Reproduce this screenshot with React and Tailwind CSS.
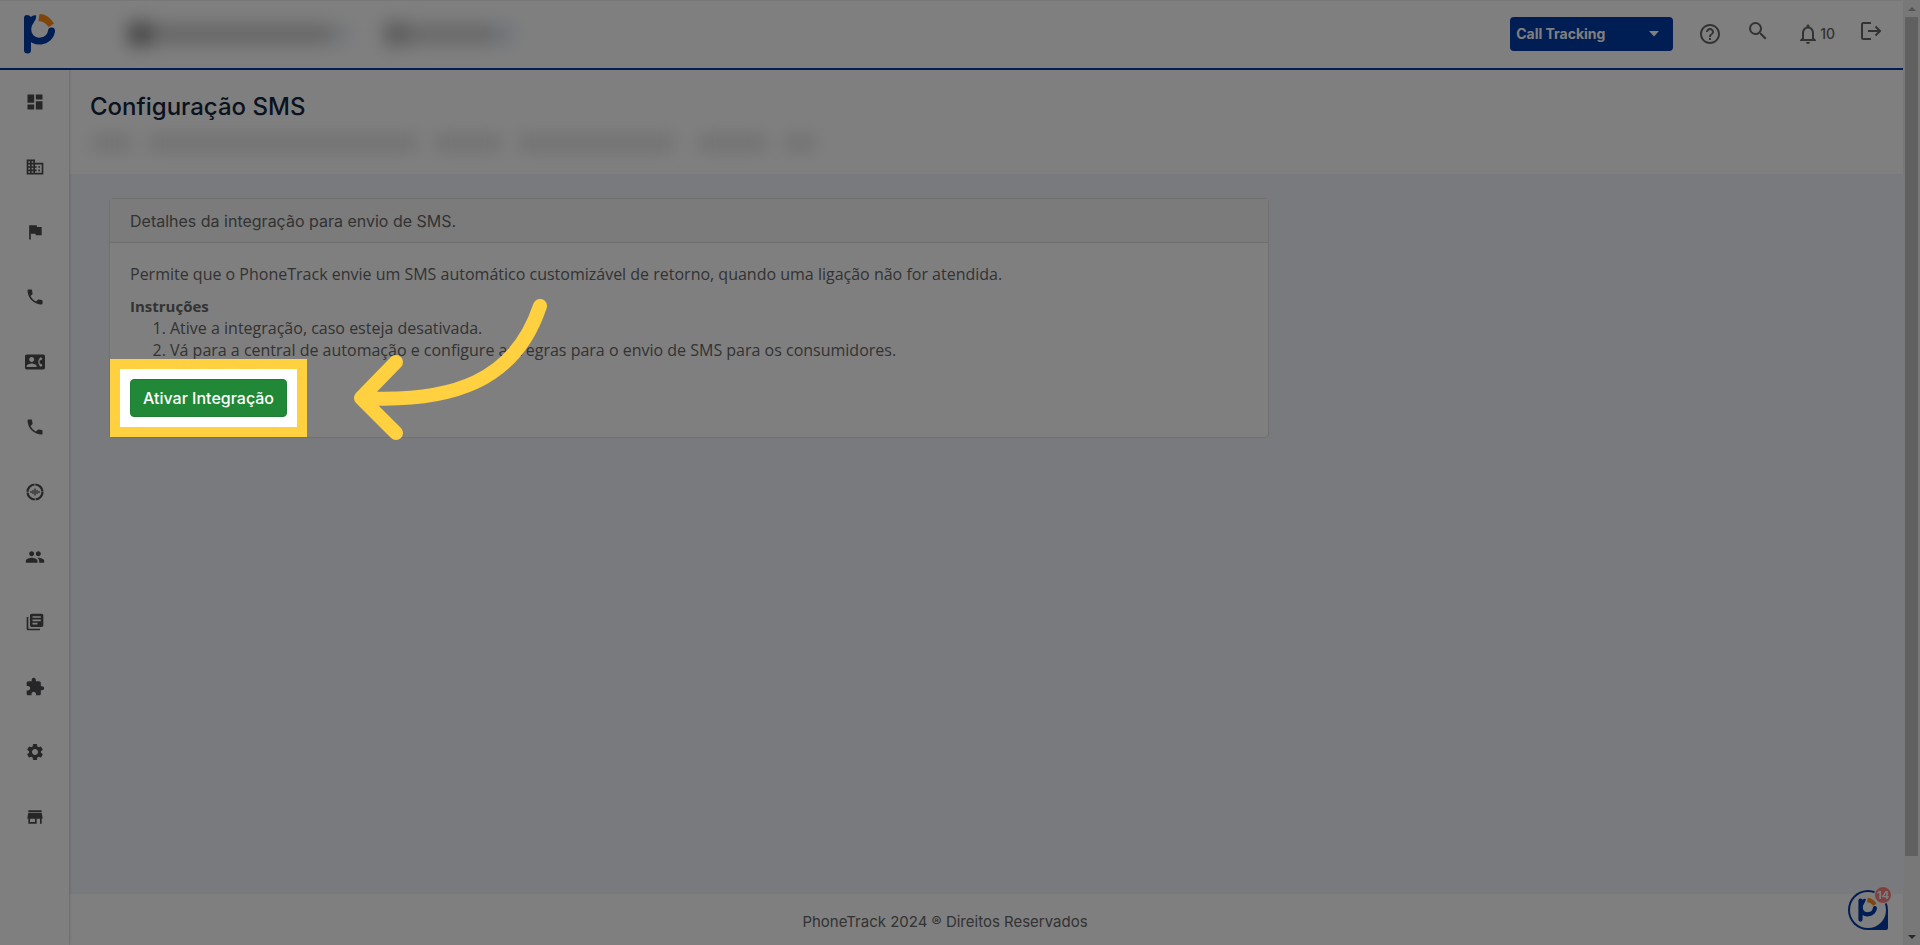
import { MdBusiness, MdContactPhone, MdDashboard, MdExtension, MdFlag, MdHelpOutline, MdLibraryBooks, MdNotificationsNone, MdPeople, MdPhone, MdSearch, MdSettings, MdStore } from 'react-icons/md'


const RecordIcon = () => (
  <svg className="size-5" viewBox="0 0 20 20" fill="none" stroke="currentColor">
    <circle cx="10" cy="10" r="7.5" strokeWidth="2.2" strokeDasharray="11 0.8" />
    <path d="M6 9v2M8 8v4M10 6.5v7M12 8v4M14 9v2" strokeWidth="1.2" />
  </svg>
)

const LogoutIcon = () => (
  <svg className="w-5 h-[18px]" viewBox="0 0 20 18" fill="none" stroke="currentColor" strokeWidth="2">
    <path d="M10 1H2.5Q1 1 1 2.5v13Q1 17 2.5 17H10M7 9h12M14.5 4.5 19 9l-4.5 4.5" />
  </svg>
)

const LogoMark = ({ className }) => (
  <svg className={className} viewBox="0 0 32 40" fill="none">
    <path d="M0 4Q0 1 3 1 5.5 1 7 3 9 .5 12.3 1.5 12.5 5.5 9.5 9 6.5 13 7.5 17.5L7 26V36Q7 39.5 3.5 39.5 0 39.5 0 36z" fill="#003aa8" />
    <path d="M27.5 17A12 11.500 0 0 1 4.5 20" stroke="#003aa8" strokeWidth="7" strokeLinecap="round" />
    <path d="M15.5 0Q24.5 0 30 9.5L24.5 13Q21 7.5 14.5 7z" fill="#ff8a14" />
  </svg>
)

const menu = [
  { label: 'Dashboard', Icon: MdDashboard },
  { label: 'Empresas', Icon: MdBusiness },
  { label: 'Campanhas', Icon: MdFlag },
  { label: 'Ligações', Icon: MdPhone },
  { label: 'Contatos', Icon: MdContactPhone },
  { label: 'Telefones', Icon: MdPhone },
  { label: 'Gravações', Icon: RecordIcon },
  { label: 'Usuários', Icon: MdPeople },
  { label: 'Relatórios', Icon: MdLibraryBooks },
  { label: 'Integrações', Icon: MdExtension },
  { label: 'Configurações', Icon: MdSettings },
  { label: 'Loja', Icon: MdStore },
]

const Header = () => (
  <header className="h-[70px] shrink-0 flex items-center bg-white border-t border-t-[#eeeeee] border-b-2 border-b-[#003aa8] pl-6 pr-[22px] pb-0.5 text-[#666666]">
    <a href="#" aria-label="PhoneTrack"><LogoMark className="w-8 h-10" /></a>
    {/* Account details are hidden */}
    <div className="flex-1 flex items-center gap-8 pl-[72px] blur-[9px]">
      <div className="flex items-center">
        <div className="w-6 h-6 bg-[#909090]" />
        <div className="w-[180px] h-5 bg-[#cccccc]" />
        <div className="w-5 h-5 bg-[#e8eef6]" />
      </div>
      <div className="flex items-center">
        <div className="w-6 h-6 bg-[#b8b8b8]" />
        <div className="w-[88px] h-5 bg-[#d0d0d0]" />
        <div className="w-5 h-5 bg-[#e0eaf6]" />
      </div>
    </div>
    <div className="relative">
      <select aria-label="Produto" className="appearance-none w-[163px] h-[34px] pl-1.5 rounded bg-[#003aa8] text-white text-[14px] font-bold">
        <option>Call Tracking</option>
      </select>
      <svg className="absolute right-3.5 top-3.5 w-2.5 h-[6px] pointer-events-none" viewBox="0 0 10 6"><path d="M0 0h10L5 5.5z" fill="#fff" /></svg>
    </div>
    <button aria-label="Ajuda" className="ml-[25px]"><MdHelpOutline className="size-6" /></button>
    <button aria-label="Buscar" className="ml-6 pb-1.5"><MdSearch className="size-6" /></button>
    <button aria-label="Notificações" className="ml-[26px] flex items-center text-[14px] font-medium"><MdNotificationsNone className="size-6" />10</button>
    <button aria-label="Sair" className="ml-[26px] pb-1.5"><LogoutIcon /></button>
  </header>
)

const Sidebar = () => (
  <nav className="w-[69px] shrink-0 bg-white flex flex-col items-center gap-[45px] pt-[22px] text-[#4c4c50] shadow-[0_0_3px_rgba(0,0,0,0.3)] z-[1]">
    {menu.map(({ label, Icon }) => (
      <a key={label} href="#" aria-label={label}><Icon className="size-5" /></a>
    ))}
  </nav>
)

const Scrollbar = () => (
  <div className="w-[17px] shrink-0 bg-[#f1f1f1] flex flex-col items-center pt-[7px] pb-[6px]">
    <svg className="w-2 h-1 shrink-0" viewBox="0 0 8 4"><path d="M4 0 8 4H0z" fill="#a3a3a3" /></svg>
    <div className="w-[13px] basis-[839px] grow-0 mt-1.5 bg-[#c1c1c1]" />
    <svg className="w-2 h-1 shrink-0 mt-auto" viewBox="0 0 8 4"><path d="M0 0h8L4 4z" fill="#505050" /></svg>
  </div>
)

const ActivateButton = () => (
  <div className="relative z-20 w-fit -mx-5 -mt-0.5 border-[10px] border-[#ffd140] bg-white p-2.5 shadow-[0_0_0_4000px_rgba(0,0,0,0.5)]">
    <button className="h-[38px] px-3 rounded bg-[#218838] border border-[#1e7e34] text-white font-['Inter'] text-base font-medium whitespace-nowrap">
      Ativar Integração
    </button>
    <svg className="absolute left-[228px] -top-[70px] w-[200px] h-[144px]" viewBox="0 0 200 144" fill="none" stroke="#ffd140" strokeWidth="14" strokeLinecap="round" strokeLinejoin="round">
      <path d="M192 7C167 82 105 104 13 99M48 63 13 99l35 35" />
    </svg>
  </div>
)

const App = () => {
  return (
    <div className="min-h-screen flex overflow-hidden font-['Inter','Open_Sans',sans-serif] text-[#666666]">
      <div className="flex-1 min-w-0 flex flex-col">
        <Header />
        <div className="flex-1 flex">
          <Sidebar />
          <div className="flex-1 min-w-0 flex flex-col">
            <div className="h-[104px] bg-white px-[21px] pt-[21px]">
              <h1 className="text-2xl leading-8 font-medium text-[#12263f]">Configuração SMS</h1>
              {/* Breadcrumb is hidden */}
              <div className="mt-2.5 pl-0.5 flex gap-4 blur-[8px]">
                <div className="w-10 h-5 bg-[#e8e8e8]" />
                <div className="w-[270px] h-5 bg-[#e8e8e8]" />
                <div className="w-[68px] h-5 bg-[#e8e8e8]" />
                <div className="w-[156px] h-5 bg-[#e8e8e8]" />
                <div className="w-[70px] h-5 ml-2 bg-[#e8e8e8]" />
                <div className="w-8 h-5 bg-[#e8e8e8]" />
              </div>
            </div>

            <main className="flex-1 bg-[#f3f5fb] px-10 pt-6 grid grid-cols-12 gap-7 content-start">
              <section className="col-span-8 bg-white border border-[#e0e0e0] rounded">
                <h2 className="h-11 px-5 flex items-center bg-[#f7f7f7] border-b border-[#dddddd] text-base">
                  Detalhes da integração para envio de SMS.
                </h2>
                <div className="px-5 pt-5 font-['Open_Sans'] text-base leading-[22px]">
                  <p>Permite que o PhoneTrack envie um SMS automático customizável de retorno, quando uma ligação não for atendida.</p>
                  <p className="mt-2.5 font-bold text-[15px]">Instruções</p>
                  <ol className="list-decimal pl-10">
                    <li>Ative a integração, caso esteja desativada.</li>
                    <li>Vá para a central de automação e configure as regras para o envio de SMS para os consumidores.</li>
                  </ol>
                  <ActivateButton />
                </div>
              </section>
            </main>

            <footer className="h-[51px] bg-white flex items-center justify-center pt-1.5 pr-[82px] text-[15px]">
              PhoneTrack 2024 ® Direitos Reservados
            </footer>
          </div>
        </div>
      </div>
      <Scrollbar />

      {/* Chat launcher */}
      <button aria-label="Chat" className="fixed right-8 bottom-[15px] size-10">
        <svg className="size-10" viewBox="0 0 40 40">
          <path d="M20 0A20 20 0 0 0 20 40H38Q40 40 40 38V20A20 20 0 0 0 20 0z" fill="#003aa8" />
          <circle cx="20" cy="20" r="18" fill="#fff" />
        </svg>
        <LogoMark className="absolute left-2.5 top-2 w-5 h-6" />
        <span className="absolute -right-1 -top-1 size-[18px] rounded-full border border-white bg-[#ff8080] text-white text-[11px] leading-4 font-bold">14</span>
      </button>
    </div>
  )
}

export default App
